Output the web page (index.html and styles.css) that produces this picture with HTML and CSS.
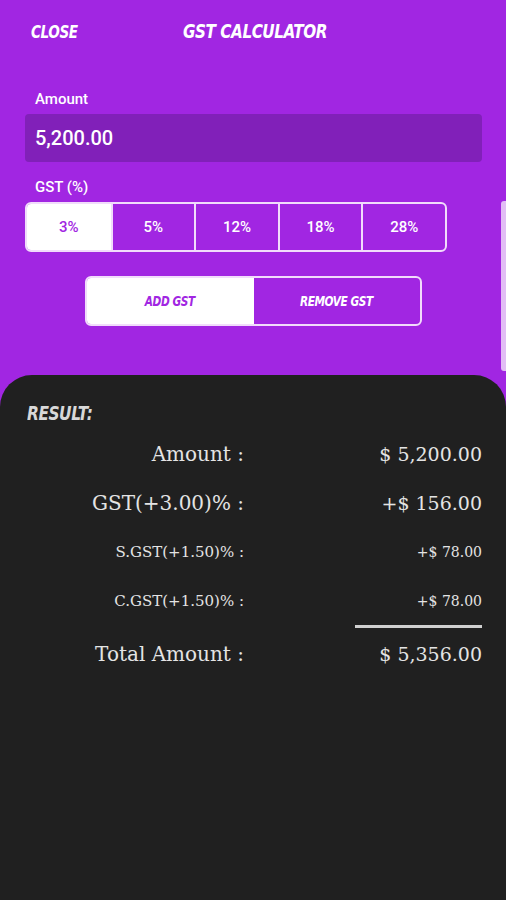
FILE: index.html
```html
<!DOCTYPE html>
<html lang="en">
<head>
    <meta charset="UTF-8">
    <meta name="viewport" content="width=device-width, initial-scale=1.0">
    <title>GST Calculator</title>
    <link rel="stylesheet" href="styles.css">
</head>
<body>
    <div class="app">
        <header class="top-bar">
            <span class="close-btn squash">CLOSE</span>
            <h1 class="squash">GST CALCULATOR</h1>
        </header>

        <div class="form">
            <label class="field-label" for="amount">Amount</label>
            <div class="amount-box" id="amount">5,200.00</div>

            <div class="field-label gst-label">GST (%)</div>
            <div class="rates">
                <div class="rate active">3%</div>
                <div class="rate">5%</div>
                <div class="rate">12%</div>
                <div class="rate">18%</div>
                <div class="rate">28%</div>
            </div>

            <div class="mode">
                <div class="mode-btn active"><span class="squash">ADD GST</span></div>
                <div class="mode-btn"><span class="squash">REMOVE GST</span></div>
            </div>
        </div>

        <div class="scroll-thumb"></div>

        <section class="result">
            <h2><span class="squash">RESULT:</span></h2>
            <div class="rows">
                <div class="row big">
                    <span class="label">Amount :</span>
                    <span class="value">$ 5,200.00</span>
                </div>
                <div class="row big">
                    <span class="label">GST(+3.00)% :</span>
                    <span class="value">+$ 156.00</span>
                </div>
                <div class="row small">
                    <span class="label">S.GST(+1.50)% :</span>
                    <span class="value">+$ 78.00</span>
                </div>
                <div class="row small">
                    <span class="label">C.GST(+1.50)% :</span>
                    <span class="value">+$ 78.00</span>
                </div>
                <div class="divider"></div>
                <div class="row big total">
                    <span class="label">Total Amount :</span>
                    <span class="value">$ 5,356.00</span>
                </div>
            </div>
        </section>
    </div>
</body>
</html>
```

FILE: styles.css
```css
:root {
    --purple: #a126e2;
    --purple-dark: #8120b9;
    --outline: #f1dcfb;
    --dark: #202020;
    --display-font: "DejaVu Sans Condensed", "DejaVu Sans", sans-serif;
    --serif-font: "DejaVu Serif", "Liberation Serif", serif;
}

* {
    box-sizing: border-box;
    margin: 0;
    padding: 0;
}

body {
    font-family: Roboto, "Noto Sans", sans-serif;
    background-color: var(--purple);
    color: white;
    width: 506px;
    height: 900px;
    overflow: hidden;
}

.app {
    position: relative;
    height: 900px;
    display: flex;
    flex-direction: column;
}

/* condensed italic display lettering */
.squash {
    display: inline-block;
    font-family: var(--display-font);
    font-weight: bold;
    font-style: italic;
    font-stretch: condensed;
    letter-spacing: -0.5px;
    transform: scaleX(0.84);
}

.top-bar {
    position: relative;
    height: 62px;
    display: flex;
    align-items: center;
    padding-left: 31px;
}

.close-btn {
    font-size: 18px;
    transform-origin: left center;
}

.top-bar h1 {
    position: absolute;
    left: 183px;
    top: 19px;
    font-size: 19px;
    line-height: 24px;
    transform: scaleX(0.89);
    transform-origin: left center;
}

.form {
    padding: 27px 24px 0 25px;
}

.field-label {
    display: block;
    font-size: 15px;
    font-weight: 500;
    padding-left: 10px;
    line-height: 20px;
}

.amount-box {
    margin-top: 5px;
    width: 457px;
    height: 48px;
    background-color: var(--purple-dark);
    border-radius: 4px;
    display: flex;
    align-items: center;
    padding-left: 10px;
    font-size: 20px;
    font-weight: 500;
}

.gst-label {
    margin-top: 15px;
}

.rates {
    margin-top: 5px;
    width: 422px;
    height: 50px;
    display: grid;
    grid-template-columns: repeat(5, 1fr);
    border: 2px solid var(--outline);
    border-radius: 6px;
    overflow: hidden;
}

.rate {
    display: flex;
    align-items: center;
    justify-content: center;
    font-size: 15px;
    font-weight: 500;
    border-left: 2px solid var(--outline);
}

.rate:first-child {
    border-left: none;
}

.rate.active {
    background-color: white;
    color: var(--purple);
}

.mode {
    margin: 24px 0 0 60px;
    width: 337px;
    height: 50px;
    display: grid;
    grid-template-columns: 1fr 1fr;
    border: 2px solid var(--outline);
    border-radius: 6px;
    overflow: hidden;
}

.mode-btn {
    display: flex;
    align-items: center;
    justify-content: center;
    font-size: 14px;
}

.mode-btn.active {
    background-color: white;
    color: var(--purple);
}

.scroll-thumb {
    position: absolute;
    right: 0;
    top: 201px;
    width: 5px;
    height: 170px;
    background-color: #e2bdf5;
    border-radius: 3px 0 0 3px;
}

.result {
    margin-top: 49px;
    flex: 1;
    background-color: var(--dark);
    border-radius: 32px 32px 0 0;
    padding: 26px 24px 0 0;
    color: #e4e4e4;
}

.result h2 {
    padding-left: 27px;
    font-size: 19px;
    line-height: 24px;
    color: #d8d8d8;
}

.result h2 .squash {
    transform: scaleX(0.9);
    transform-origin: left center;
}

.rows {
    margin-top: 3px;
}

.row {
    display: grid;
    grid-template-columns: 244px 1fr;
    align-items: center;
    font-family: var(--serif-font);
    height: 49px;
}

.row .label,
.row .value {
    text-align: right;
}

.row.big .label {
    font-size: 20px;
}

.row.big .value {
    font-size: 19px;
}

.row.small {
    font-size: 15px;
}

.row.small .value {
    font-size: 14px;
}

.divider {
    margin: 0 0 0 355px;
    height: 3px;
    background-color: #d0d0d0;
}

.row.total {
    height: 52px;
}
```
